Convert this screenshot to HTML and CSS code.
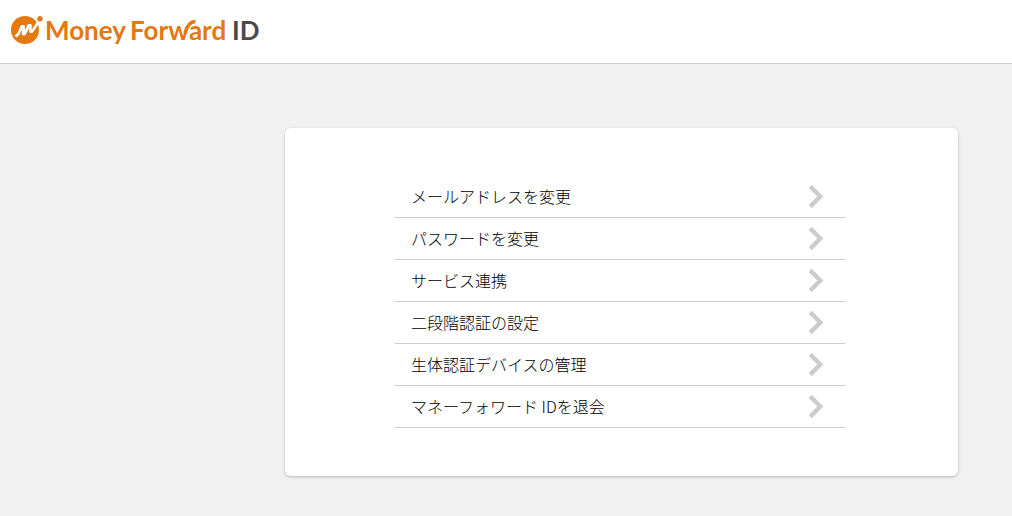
FILE: index.html
```html
<!DOCTYPE html>
<html lang="ja">
<head>
<meta charset="utf-8">
<meta name="viewport" content="width=device-width, initial-scale=1">
<title>Money Forward ID</title>
<link rel="stylesheet" href="styles.css">
</head>
<body>
<svg class="sprite" aria-hidden="true">
  <symbol id="chevron" viewBox="0 0 16 26">
    <path d="M2 2.5 L12.5 13 L2 23.5" fill="none" stroke="#ccc" stroke-width="4.5"/>
  </symbol>
</svg>
<header class="header">
  <a class="logo" href="#" aria-label="Money Forward ID">
    <svg class="logo-art" width="250" height="34" viewBox="0 0 250 34">
      <circle cx="15" cy="16" r="14" fill="#e47911"/>
      <circle cx="30" cy="4.7" r="2.7" fill="#e47911"/>
      <path d="M5.5 22.5 L8.5 20 L11.8 12.5 L13.5 12.5 L13.2 20 L14.5 20 L18.8 11.5 L20.3 11.5 L20.4 17.5 L22 17.5 L28.5 8" fill="none" stroke="#fff" stroke-width="2.8" stroke-linejoin="round"/>
      <g class="logo-word">
        <text x="35" y="26">Money</text>
        <text x="120" y="26">Forward</text>
        <text class="logo-id" x="222" y="26">ID</text>
      </g>
      <path d="M175 19 C177 12 180 7.5 185.5 7.5" fill="none" stroke="#e47911" stroke-width="3.4"/>
    </svg>
  </a>
</header>
<main class="main">
  <section class="card">
    <ul class="menu">
      <li><a class="menu-link" href="#">メールアドレスを変更<svg class="chevron" aria-hidden="true"><use href="#chevron"/></svg></a></li>
      <li><a class="menu-link" href="#">パスワードを変更<svg class="chevron" aria-hidden="true"><use href="#chevron"/></svg></a></li>
      <li><a class="menu-link" href="#">サービス連携<svg class="chevron" aria-hidden="true"><use href="#chevron"/></svg></a></li>
      <li><a class="menu-link" href="#">二段階認証の設定<svg class="chevron" aria-hidden="true"><use href="#chevron"/></svg></a></li>
      <li><a class="menu-link" href="#">生体認証デバイスの管理<svg class="chevron" aria-hidden="true"><use href="#chevron"/></svg></a></li>
      <li><a class="menu-link" href="#">マネーフォワード IDを退会<svg class="chevron" aria-hidden="true"><use href="#chevron"/></svg></a></li>
    </ul>
  </section>
</main>
</body>
</html>
```
FILE: styles.css
```css
* {
  box-sizing: border-box;
}

body {
  margin: 0;
  min-height: 100vh;
  background: #f1f1f1;
  color: #000;
  font-family: "Noto Sans CJK JP", sans-serif;
  font-size: 16px;
  font-weight: 300;
  line-height: 25px;
}

.sprite {
  position: absolute;
  width: 0;
  height: 0;
}

.header {
  padding: 14px 10px 15px;
  background: #fff;
  border-bottom: 1px solid #ccc;
}

.logo,
.logo-art {
  display: block;
}

.logo {
  width: 250px;
}

.logo-word {
  font-family: Lato, sans-serif;
  font-size: 26px;
  font-weight: 700;
  fill: #e47911;
}

.logo-id {
  fill: #4a4a4a;
}

.main {
  padding: 64px 54px 40px 285px;
}

.card {
  padding: 48px 113px 48px 110px;
  background: #fff;
  border-radius: 6px;
  box-shadow: 0 1px 3px rgba(0, 0, 0, 0.25);
}

.menu {
  margin: 0;
  padding: 0;
  list-style: none;
}

.menu-link {
  display: flex;
  align-items: center;
  justify-content: space-between;
  padding: 8px 21px 8px 16px;
  border-bottom: 1px solid #ccc;
  color: inherit;
  text-decoration: none;
}

.chevron {
  flex: none;
  width: 16px;
  height: 25px;
}
```
